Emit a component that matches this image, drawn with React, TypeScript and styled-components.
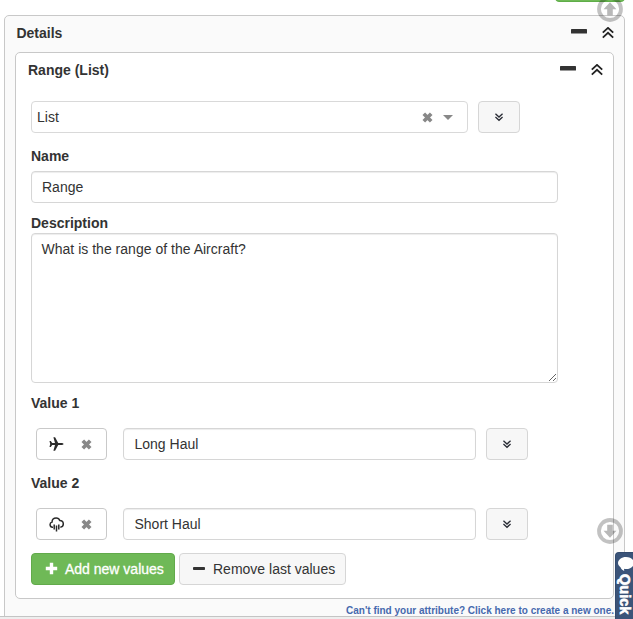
import React from "react";
import styled, { createGlobalStyle } from "styled-components";

const GlobalStyle = createGlobalStyle`
  * { box-sizing: border-box; }
  body {
    margin: 0;
    overflow: hidden;
    background: #fff;
    color: #333;
    font: 14px/20px "Liberation Sans", Arial, Helvetica, sans-serif;
  }
  svg { display: block; flex: none; }
`;

const Page = styled.div`
  position: relative;
  width: 633px;
  height: 619px;
  overflow: hidden;
  background: #eee;
`;

const Viewport = styled.main`
  height: 617px;
  overflow: hidden;
  padding: 15px 8px 0 4px;
  background: #fff;
  border-bottom: 1px solid #c4c4c4;
`;

const OuterPanel = styled.section`
  height: 640px;
  padding: 0 10px;
  background: #fafafa;
  border: 1px solid #c8c8c8;
  border-radius: 5px;
`;

const InnerPanel = styled.section`
  height: 547px;
  padding: 0 15px;
  background: #fff;
  border: 1px solid #c8c8c8;
  border-radius: 5px;
`;

const Header = styled.header<{ $inner?: boolean }>`
  display: flex;
  align-items: flex-start;
  height: ${(p) => (p.$inner ? 48 : 36)}px;
  padding: 7px 0 0 ${(p) => (p.$inner ? 0 : 1.4)}px;
  margin: ${(p) => (p.$inner ? "0 -5px 0 -3px" : "0")};
`;

const Title = styled.h2`
  flex: 1;
  margin: 0;
  font-size: 14px;
  line-height: 20px;
  font-weight: bold;
`;

const Tools = styled.div`
  display: flex;
  gap: 15px;
  padding-top: 4px;
`;

const Label = styled.label<{ $top: number; $bottom: number }>`
  display: block;
  height: 20px;
  margin: ${(p) => p.$top}px 0 ${(p) => p.$bottom}px;
  font-weight: bold;
`;

const Row = styled.div<{ $indent?: boolean }>`
  display: flex;
  height: 32px;
  padding-left: ${(p) => (p.$indent ? 5 : 0)}px;
`;

const Select = styled.div`
  display: flex;
  align-items: center;
  width: 437px;
  padding: 0 14px 0 5px;
  margin-right: 10px;
  border: 1px solid #d9d9d9;
  border-radius: 4px;

  span { flex: 1; }
  svg + svg { margin-left: 10px; }
`;

const Input = styled.input<{ $width: number }>`
  display: block;
  width: ${(p) => p.$width}px;
  height: 32px;
  padding: 0 10px;
  color: #333;
  font: inherit;
  background: #fff;
  border: 1px solid #d6d6d6;
  border-radius: 4px;
  box-shadow: inset 0 1px 1px rgba(0, 0, 0, 0.075);
  outline: 0;
`;

const TextArea = styled.textarea`
  display: block;
  width: 527px;
  height: 150px;
  padding: 5px 9.5px;
  color: #333;
  font: inherit;
  letter-spacing: 0.015px;
  border: 1px solid #d6d6d6;
  border-radius: 4px;
  box-shadow: inset 0 1px 1px rgba(0, 0, 0, 0.075);
  resize: both;
  outline: 0;
`;

const IconPicker = styled.div`
  display: flex;
  align-items: center;
  gap: 17px;
  width: 71px;
  height: 32px;
  padding-left: 12px;
  margin-right: 16px;
  border: 1px solid #c9c9c9;
  border-radius: 4px;
`;

const ToggleButton = styled.button`
  display: flex;
  align-items: center;
  justify-content: center;
  width: 42px;
  height: 32px;
  padding: 0;
  background: #f7f7f7;
  border: 1px solid #d6d6d6;
  border-radius: 4px;
`;

const ValueInput = styled(Input)`
  margin-right: 10px;
  padding-left: 10.5px;
`;

const Actions = styled.div`
  display: flex;
  gap: 4px;
  margin-top: 13px;
`;

const ActionButton = styled.button<{ $primary?: boolean }>`
  display: flex;
  align-items: center;
  gap: ${(p) => (p.$primary ? 7 : 8)}px;
  width: ${(p) => (p.$primary ? 144 : 167)}px;
  height: 32px;
  padding: 0 0 0 13px;
  white-space: nowrap;
  color: ${(p) => (p.$primary ? "#fff" : "#333")};
  font: inherit;
  -webkit-text-stroke: ${(p) => (p.$primary ? "0.3px #fff" : "0")};
  background: ${(p) => (p.$primary ? "#6fb957" : "#f7f7f7")};
  border: 1px solid ${(p) => (p.$primary ? "#62aa4b" : "#d6d6d6")};
  border-radius: 4px;

  svg { margin-top: -1px; }
`;

const HelpLink = styled.a`
  display: block;
  margin-top: 4px;
  text-align: right;
  color: #4669ae;
  font-size: 10px;
  line-height: 15px;
  font-weight: bold;
  white-space: nowrap;
`;

const TopButtonEdge = styled.div`
  position: absolute;
  top: -30px;
  left: 555px;
  width: 70px;
  height: 32px;
  background: #6fb957;
  border: 1px solid #5fad48;
  border-radius: 4px;
`;

const ScrollButton = styled.div<{ $top: number; $down?: boolean }>`
  position: absolute;
  top: ${(p) => p.$top}px;
  left: 597px;
  transform: ${(p) => (p.$down ? "rotate(180deg)" : "none")};
`;

const QuickTab = styled.div`
  position: absolute;
  top: 552px;
  left: 615px;
  display: flex;
  flex-direction: column;
  width: 18px;
  height: 67px;
  padding: 4px 0 0 2px;
  color: #fff;
  background: #3b5479;
  border: 1px solid #344b6e;
  border-width: 1px 0 0 1px;
  border-radius: 4px 0 0 0;
`;

const QuickText = styled.span`
  width: 15px;
  margin: 3px 0 0 -1px;
  writing-mode: vertical-rl;
  font-size: 14.5px;
  line-height: 15px;
  font-weight: bold;
  -webkit-text-stroke: 0.6px #fff;
`;

const Dash = ({ w = 16, h = 4 }: { w?: number; h?: number }) => (
  <svg width={w} height={h}>
    <rect width={w} height={h} rx="0.8" fill="#333" />
  </svg>
);

const HeaderTools = () => (
  <Tools>
    <svg width="16" height="12">
      <rect y="2" width="16" height="4.6" rx="0.6" fill="#333" />
    </svg>
    <svg width="12" height="12" viewBox="0 0 12 12" fill="none" stroke="#222" strokeWidth="1.8">
      <path d="M.8 5.7 6 .9l5.2 4.8M.8 10.6 6 5.8l5.2 4.8" />
    </svg>
  </Tools>
);

const DoubleDown = () => (
  <svg width="8" height="9" viewBox="0 0 8 9" fill="none" stroke="#292c35" strokeWidth="1.4">
    <path d="M.4.7 4 4 7.6.7M.4 4 4 7.3 7.6 4" />
  </svg>
);

const Cross = () => (
  <svg width="11" height="11" viewBox="0 0 11 11">
    <path d="m1.8 1.8 7.4 7.4m0-7.4L1.8 9.2" stroke="#888" strokeWidth="3.7" />
  </svg>
);

const Plane = () => (
  <svg width="15" height="14" viewBox="0 0 15 14" fill="#2b2b2b">
    <path d="M14.5 7c0 .6-1.2 1-2.3 1H9.2L6.1 13.7H4.4L6 8H3.2L1.8 10H.5L1.2 7 .5 4h1.300l1.400 2H6L4.400.3h1.700L9.200 6h3c1.100 0 2.300.4 2.300 1Z" />
  </svg>
);

const RainCloud = () => (
  <svg width="15" height="15" viewBox="0 0 15 15" fill="none" stroke="#2b2b2b" strokeWidth="1.5">
    <path d="M4 10.2H3.5A2.6 2.6 0 0 1 3 5.1C3.1 2.7 4.9 1.1 7.2 1.1c1.7 0 3.1 1 3.7 2.5 2 .1 3.4 1.6 3.4 3.4 0 1.8-1.3 3.1-3 3.2M5.2 7.5v5M7.5 8.6v6M9.8 7.5v5" />
  </svg>
);

const Plus = () => (
  <svg width="13" height="13" viewBox="0 0 13 13">
    <path d="M6.5.8v11.4M.8 6.5h11.4" stroke="#fff" strokeWidth="3.4" />
  </svg>
);

const ArrowCircle = () => (
  <svg width="26" height="26" viewBox="0 0 26 26">
    <circle cx="13" cy="13" r="11" fill="none" stroke="#000" strokeOpacity=".24" strokeWidth="3.8" />
    <path d="m13 6.2 6.5 7h-3.7v6.1h-5.600v-6.100H6.500Z" fill="#000" fillOpacity=".28" />
  </svg>
);

const values = [
  { label: "Value 1", text: "Long Haul", icon: <Plane /> },
  { label: "Value 2", text: "Short Haul", icon: <RainCloud /> },
];

export default function App() {
  return (
    <Page>
      <GlobalStyle />
      <Viewport>
        <OuterPanel>
          <Header>
            <Title>Details</Title>
            <HeaderTools />
          </Header>
          <InnerPanel>
            <Header $inner>
              <Title>Range (List)</Title>
              <HeaderTools />
            </Header>
            <Row>
              <Select>
                <span>List</span>
                <Cross />
                <svg width="10" height="5"><path d="M0 0h10L5 5Z" fill="#888" /></svg>
              </Select>
              <ToggleButton aria-label="Expand"><DoubleDown /></ToggleButton>
            </Row>
            <Label $top={13} $bottom={5}>Name</Label>
            <Input $width={527} defaultValue="Range" />
            <Label $top={10} $bottom={0}>Description</Label>
            <TextArea defaultValue="What is the range of the Aircraft?" />
            {values.map((v) => (
              <React.Fragment key={v.label}>
                <Label $top={v.label === "Value 1" ? 10 : 13} $bottom={15}>{v.label}</Label>
                <Row $indent>
                  <IconPicker>{v.icon}<Cross /></IconPicker>
                  <ValueInput $width={353} defaultValue={v.text} />
                  <ToggleButton aria-label="Expand"><DoubleDown /></ToggleButton>
                </Row>
              </React.Fragment>
            ))}
            <Actions>
              <ActionButton $primary><Plus />Add new values</ActionButton>
              <ActionButton><Dash w={12} h={3} />Remove last values</ActionButton>
            </Actions>
          </InnerPanel>
          <HelpLink>Can't find your attribute? Click here to create a new one.</HelpLink>
        </OuterPanel>
      </Viewport>
      <TopButtonEdge />
      <ScrollButton $top={-4}><ArrowCircle /></ScrollButton>
      <ScrollButton $top={518} $down><ArrowCircle /></ScrollButton>
      <QuickTab>
        <svg width="15" height="14" viewBox="0 0 15 14">
          <path d="M8 0c4.400 0 8 2.700 8 6s-3.600 6-8 6c-.9 0-1.400-.1-2-.2.1.8.2 1.500.2 2.200C4.500 13.200 3.100 11.800 2.500 10.200 1 9.200 0 7.700 0 6 0 2.700 3.600 0 8 0Z" fill="#fff" />
        </svg>
        <QuickText>Quick</QuickText>
      </QuickTab>
    </Page>
  );
}
